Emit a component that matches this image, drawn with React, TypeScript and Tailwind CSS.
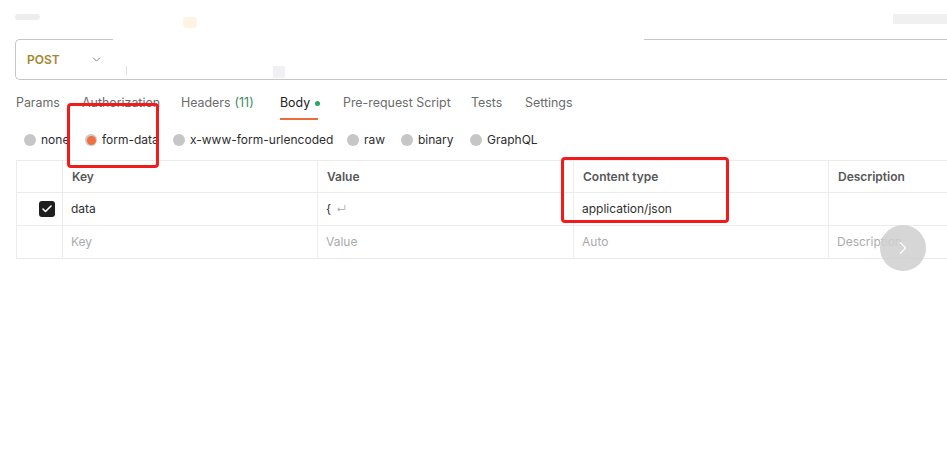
import { Check, ChevronDown, ChevronRight } from "lucide-react";

const tabs = [
  { label: "Params", w: "w-[66px]" },
  { label: "Authorization", w: "w-[99px]" },
  { label: "Headers", count: "(11)", w: "w-[99px]" },
  { label: "Body", dot: true, active: true, w: "w-[63px]" },
  { label: "Pre-request Script", w: "w-[128px]" },
  { label: "Tests", w: "w-[54px]" },
  { label: "Settings", w: "w-[70px]" },
];

const bodyTypes = [
  { label: "none", w: "w-[61px]" },
  { label: "form-data", selected: true, w: "w-[88px]" },
  { label: "x-www-form-urlencoded", w: "w-[174px]" },
  { label: "raw", w: "w-[54px]" },
  { label: "binary", w: "w-[69px]" },
  { label: "GraphQL", w: "w-[80px]" },
];

const cols = "grid grid-cols-[46px_255px_256px_255px_268px] border-b border-[#ececec]";

const Cell = ({ children, className = "" }: { children?: React.ReactNode; className?: string }) => (
  <div className={`flex items-center border-l border-[#ececec] px-[9px] ${className}`}>{children}</div>
);

export default function App() {
  return (
    <div
      className="relative h-[464px] w-[947px] overflow-hidden bg-white text-[13px]"
      style={{ fontFamily: "Inter, 'Noto Sans', sans-serif" }}
    >
      {/* top strip, mostly blurred */}
      <div className="flex h-[39px] items-start">
        <div className="ml-[15px] mt-[14px] h-[6px] w-[25px] rounded-sm bg-[#ededed]" />
        <div className="ml-[143px] mt-[17px] h-[11px] w-[14px] rounded-sm bg-[#fdf4e4]" />
        <div className="ml-auto mt-[14px] h-[10px] w-[54px] bg-[#f0f0f0]" />
      </div>

      {/* url row */}
      <div className="ml-[15px] flex h-[41px]">
        <div className="flex w-[98px] items-center rounded-l-[5px] border-y border-l border-[#c6c6c6] pl-[11px]">
          <span className="text-[12px] font-semibold text-[#a4872e]">POST</span>
          <ChevronDown className="ml-[30px] h-[13px] w-[13px] text-[#777]" strokeWidth={1.6} />
        </div>
        <div className="relative flex-1 border-b border-[#c6c6c6]">
          <div className="ml-[531px] border-t border-[#c6c6c6]" />
          <div className="absolute left-[13px] top-[27px] h-[9px] w-px bg-[#dedede]" />
          <div className="absolute left-[160px] top-[27px] h-[12px] w-[12px] bg-[#f1f1f5]" />
        </div>
      </div>

      {/* tabs */}
      <div className="ml-[16px] flex h-[40px] items-end text-[12.4px] text-[#6b6b6b]">
        {tabs.map((t) => (
          <div key={t.label} className={`flex h-[40px] flex-col ${t.w}`}>
            <div className="flex h-[38px] items-center pt-[8px]">
              <span className={t.active ? "text-[#212121]" : ""}>{t.label}</span>
              {t.count && <span className="ml-[4px] text-[#3d8a5f]">{t.count}</span>}
              {t.dot && <span className="ml-[5px] h-[5px] w-[5px] rounded-full bg-[#28a860]" />}
            </div>
            {t.active && <div className="h-[2px] w-[38px] bg-[#ef6a3a]" />}
          </div>
        ))}
      </div>

      {/* body types */}
      <div className="ml-[24px] flex h-[40px] items-center text-[#2e2e2e]">
        {bodyTypes.map((b) => (
          <div key={b.label} className={`flex items-center ${b.w}`}>
            {b.selected ? (
              <span className="flex h-[12px] w-[12px] items-center justify-center rounded-full bg-[#c9c9c9]">
                <span className="h-[9px] w-[9px] rounded-full bg-[#f26e3c]" />
              </span>
            ) : (
              <span className="h-[12px] w-[12px] rounded-full bg-[#c6c6c6]" />
            )}
            <span className="ml-[5px] text-[12px]">{b.label}</span>
          </div>
        ))}
      </div>

      {/* table */}
      <div className="ml-[16px] w-[1080px] border-t border-[#ececec] text-[12px]">
        <div className={`${cols} h-[32px] font-semibold text-[#575757]`}>
          <Cell />
          <Cell>Key</Cell>
          <Cell>Value</Cell>
          <Cell>Content type</Cell>
          <Cell>Description</Cell>
        </div>
        <div className={`${cols} h-[33px] text-[#303030]`}>
          <Cell className="justify-end pr-[7px]">
            <span className="flex h-[16px] w-[16px] items-center justify-center rounded-[3px] bg-[#1f1f1f]">
              <Check className="h-[12px] w-[12px] text-white" strokeWidth={3.2} />
            </span>
          </Cell>
          <Cell className="pl-[8px]">data</Cell>
          <Cell className="pl-[8px]">
            {"{"}
            <span className="ml-[5px] text-[10px] text-[#aaa]">↵</span>
          </Cell>
          <Cell className="pl-[8px]">application/json</Cell>
          <Cell />
        </div>
        <div className={`${cols} h-[33px] text-[#ababab]`}>
          <Cell />
          <Cell className="pl-[8px]">Key</Cell>
          <Cell className="pl-[8px]">Value</Cell>
          <Cell className="pl-[8px]">Auto</Cell>
          <Cell className="pl-[8px]">Description</Cell>
        </div>
      </div>

      {/* annotation boxes */}
      <div className="absolute left-[67px] top-[103px] h-[65px] w-[92px] rounded-[4px] border-[3px] border-[#f21b1b]" />
      <div className="absolute left-[561px] top-[157px] h-[66px] w-[168px] rounded-[4px] border-[3px] border-[#f21b1b]" />

      {/* floating next button */}
      <div className="absolute left-[880px] top-[225px] flex h-[46px] w-[46px] items-center justify-center rounded-full bg-[#cfcfcf]/85">
        <ChevronRight className="h-[22px] w-[22px] text-white" strokeWidth={1.2} />
      </div>
    </div>
  );
}
